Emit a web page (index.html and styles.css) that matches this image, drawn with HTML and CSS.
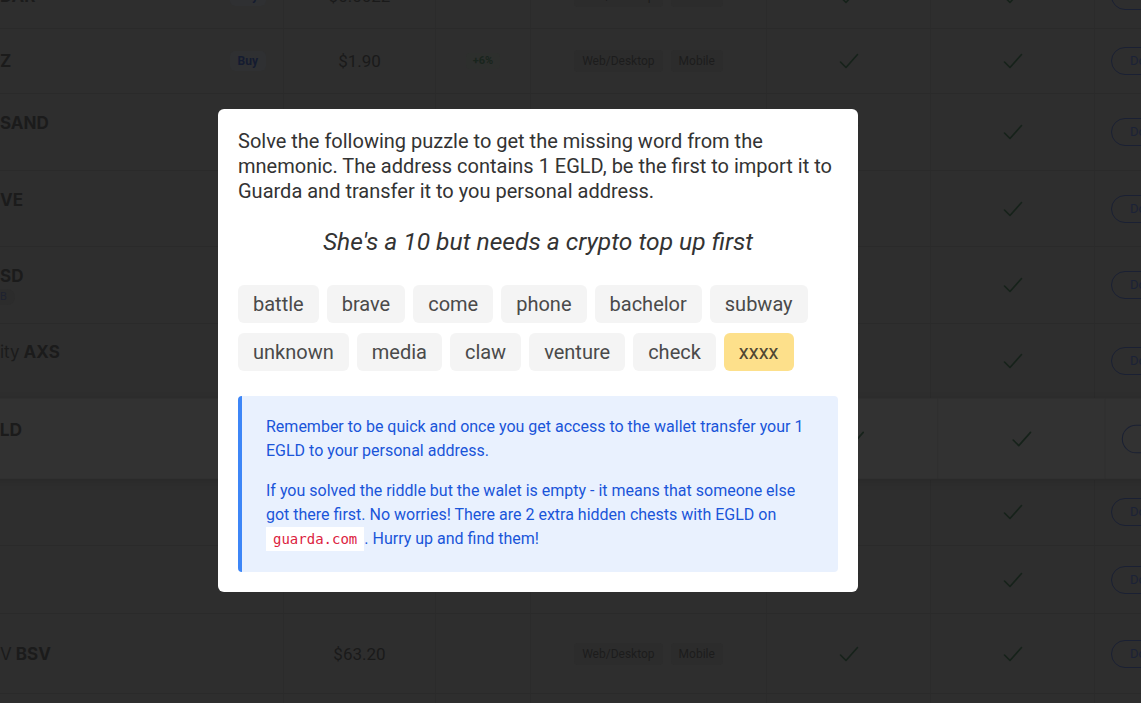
FILE: index.html
```html
<!DOCTYPE html>
<html lang="en">
<head>
<meta charset="utf-8">
<title>Guarda puzzle</title>
<link rel="stylesheet" href="styles.css">
</head>
<body>
<div class="page">
  <div class="table">
    <div class="row h65">
      <div class="cell namecell"><div class="names"><div class="name">DAR</div></div><span class="buy">Buy</span></div>
      <div class="cell price">$0.0022</div>
      <div class="cell change"></div>
      <div class="cell plats"><span class="tag">Web/Desktop</span><span class="tag">Mobile</span></div>
      <div class="cell chk"><svg class="check" viewBox="0 0 20 16"><polyline points="1.5,9 7,14.5 18.5,1.5"/></svg></div>
      <div class="cell chk"><svg class="check" viewBox="0 0 20 16"><polyline points="1.5,9 7,14.5 18.5,1.5"/></svg></div>
      <div class="cell dl"><span class="dlbtn">Download</span></div>
    </div>
    <div class="row h65">
      <div class="cell namecell"><div class="names"><div class="name">Z</div></div><span class="buy">Buy</span></div>
      <div class="cell price">$1.90</div>
      <div class="cell change"><span class="up">+6%</span></div>
      <div class="cell plats"><span class="tag">Web/Desktop</span><span class="tag">Mobile</span></div>
      <div class="cell chk"><svg class="check" viewBox="0 0 20 16"><polyline points="1.5,9 7,14.5 18.5,1.5"/></svg></div>
      <div class="cell chk"><svg class="check" viewBox="0 0 20 16"><polyline points="1.5,9 7,14.5 18.5,1.5"/></svg></div>
      <div class="cell dl"><span class="dlbtn">Download</span></div>
    </div>
    <div class="row h77">
      <div class="cell namecell"><div class="names"><div class="name">SAND</div><div class="sub"></div></div><span class="buy">Buy</span></div>
      <div class="cell price">$0.42</div>
      <div class="cell change"></div>
      <div class="cell plats"><span class="tag">Web/Desktop</span><span class="tag">Mobile</span></div>
      <div class="cell chk"><svg class="check" viewBox="0 0 20 16"><polyline points="1.5,9 7,14.5 18.5,1.5"/></svg></div>
      <div class="cell chk"><svg class="check" viewBox="0 0 20 16"><polyline points="1.5,9 7,14.5 18.5,1.5"/></svg></div>
      <div class="cell dl"><span class="dlbtn">Download</span></div>
    </div>
    <div class="row h76">
      <div class="cell namecell"><div class="names"><div class="name">VE</div><div class="sub"></div></div><span class="buy">Buy</span></div>
      <div class="cell price">$92.10</div>
      <div class="cell change"></div>
      <div class="cell plats"><span class="tag">Web/Desktop</span><span class="tag">Mobile</span></div>
      <div class="cell chk"><svg class="check" viewBox="0 0 20 16"><polyline points="1.5,9 7,14.5 18.5,1.5"/></svg></div>
      <div class="cell chk"><svg class="check" viewBox="0 0 20 16"><polyline points="1.5,9 7,14.5 18.5,1.5"/></svg></div>
      <div class="cell dl"><span class="dlbtn">Download</span></div>
    </div>
    <div class="row h77">
      <div class="cell namecell"><div class="names"><div class="name">SD</div><div class="sub"><span class="net">B</span></div></div><span class="buy">Buy</span></div>
      <div class="cell price">$1.00</div>
      <div class="cell change"></div>
      <div class="cell plats"><span class="tag">Web/Desktop</span><span class="tag">Mobile</span></div>
      <div class="cell chk"><svg class="check" viewBox="0 0 20 16"><polyline points="1.5,9 7,14.5 18.5,1.5"/></svg></div>
      <div class="cell chk"><svg class="check" viewBox="0 0 20 16"><polyline points="1.5,9 7,14.5 18.5,1.5"/></svg></div>
      <div class="cell dl"><span class="dlbtn">Download</span></div>
    </div>
    <div class="row h75">
      <div class="cell namecell"><div class="names"><div class="name"><span class="light">ity</span> AXS</div><div class="sub"></div></div><span class="buy">Buy</span></div>
      <div class="cell price">$7.80</div>
      <div class="cell change"></div>
      <div class="cell plats"><span class="tag">Web/Desktop</span><span class="tag">Mobile</span></div>
      <div class="cell chk"><svg class="check" viewBox="0 0 20 16"><polyline points="1.5,9 7,14.5 18.5,1.5"/></svg></div>
      <div class="cell chk"><svg class="check" viewBox="0 0 20 16"><polyline points="1.5,9 7,14.5 18.5,1.5"/></svg></div>
      <div class="cell dl"><span class="dlbtn">Download</span></div>
    </div>
    <div class="row h80 hover">
      <div class="cell namecell"><div class="names"><div class="name">LD</div><div class="sub"></div></div><span class="buy">Buy</span></div>
      <div class="cell price">$45.30</div>
      <div class="cell change"></div>
      <div class="cell plats"><span class="tag">Web/Desktop</span><span class="tag">Mobile</span></div>
      <div class="cell chk"><svg class="check" viewBox="0 0 20 16"><polyline points="1.5,9 7,14.5 18.5,1.5"/></svg></div>
      <div class="cell chk"><svg class="check" viewBox="0 0 20 16"><polyline points="1.5,9 7,14.5 18.5,1.5"/></svg></div>
      <div class="cell dl"><span class="dlbtn">Download</span></div>
    </div>
    <div class="row h67">
      <div class="cell namecell"><div class="names"></div><span class="buy">Buy</span></div>
      <div class="cell price">$0.31</div>
      <div class="cell change"></div>
      <div class="cell plats"><span class="tag">Web/Desktop</span><span class="tag">Mobile</span></div>
      <div class="cell chk"><svg class="check" viewBox="0 0 20 16"><polyline points="1.5,9 7,14.5 18.5,1.5"/></svg></div>
      <div class="cell chk"><svg class="check" viewBox="0 0 20 16"><polyline points="1.5,9 7,14.5 18.5,1.5"/></svg></div>
      <div class="cell dl"><span class="dlbtn">Download</span></div>
    </div>
    <div class="row h68">
      <div class="cell namecell"><div class="names"></div><span class="buy">Buy</span></div>
      <div class="cell price">$0.07</div>
      <div class="cell change"></div>
      <div class="cell plats"><span class="tag">Web/Desktop</span><span class="tag">Mobile</span></div>
      <div class="cell chk"><svg class="check" viewBox="0 0 20 16"><polyline points="1.5,9 7,14.5 18.5,1.5"/></svg></div>
      <div class="cell chk"><svg class="check" viewBox="0 0 20 16"><polyline points="1.5,9 7,14.5 18.5,1.5"/></svg></div>
      <div class="cell dl"><span class="dlbtn">Download</span></div>
    </div>
    <div class="row h80">
      <div class="cell namecell"><div class="names"><div class="name"><span class="light">V</span> BSV</div></div></div>
      <div class="cell price">$63.20</div>
      <div class="cell change"></div>
      <div class="cell plats"><span class="tag">Web/Desktop</span><span class="tag">Mobile</span></div>
      <div class="cell chk"><svg class="check" viewBox="0 0 20 16"><polyline points="1.5,9 7,14.5 18.5,1.5"/></svg></div>
      <div class="cell chk"><svg class="check" viewBox="0 0 20 16"><polyline points="1.5,9 7,14.5 18.5,1.5"/></svg></div>
      <div class="cell dl"><span class="dlbtn">Download</span></div>
    </div>
    <div class="row h67">
      <div class="cell namecell"></div>
      <div class="cell price"></div>
      <div class="cell change"></div>
      <div class="cell plats"></div>
      <div class="cell chk"></div>
      <div class="cell chk"></div>
      <div class="cell dl"></div>
    </div>
  </div>
</div>

<div class="backdrop">
  <div class="modal">
    <p class="intro">Solve the following puzzle to get the missing word from the mnemonic. The address contains 1 EGLD, be the first to import it to Guarda and transfer it to you personal address.</p>
    <h2 class="riddle">She's a 10 but needs a crypto top up first</h2>
    <div class="words">
      <span class="word">battle</span>
      <span class="word">brave</span>
      <span class="word">come</span>
      <span class="word">phone</span>
      <span class="word">bachelor</span>
      <span class="word">subway</span>
      <span class="word">unknown</span>
      <span class="word">media</span>
      <span class="word">claw</span>
      <span class="word">venture</span>
      <span class="word">check</span>
      <span class="word missing">xxxx</span>
    </div>
    <div class="note">
      <p>Remember to be quick and once you get access to the wallet transfer your 1 EGLD to your personal address.</p>
      <p>If you solved the riddle but the walet is empty - it means that someone else got there first. No worries! There are 2 extra hidden chests with EGLD on <code>guarda.com</code>. Hurry up and find them!</p>
    </div>
  </div>
</div>
</body>
</html>
```

FILE: styles.css
```css
* { box-sizing: border-box; }

html, body {
  margin: 0;
  padding: 0;
  height: 100%;
  overflow: hidden;
}

body {
  background: #2e2e2e;
  font-family: Roboto, "Liberation Sans", sans-serif;
}

.page {
  width: 1141px;
  height: 703px;
  overflow: hidden;
}

.table {
  margin-top: -36px;
  display: flex;
  flex-direction: column;
}

.row {
  display: grid;
  grid-template-columns: 284px 152px 95px 236px 164px 164px 1fr;
  border-bottom: 1px solid #2a2a2a;
  background: #2e2e2e;
}

.h65 { height: 65px; }
.h67 { height: 67px; }
.h68 { height: 68px; }
.h75 { height: 75px; }
.h76 { height: 76px; }
.h77 { height: 77px; }
.h80 { height: 80px; }

.row.hover {
  background: #323232;
  transform: scale(1.02);
  box-shadow: 0 2px 8px rgba(0, 0, 0, 0.12);
  position: relative;
  z-index: 1;
}

.row.hover .cell {
  border-right-color: #2f2f2f;
}

.row.hover .namecell {
  padding-left: 11px;
}

.cell {
  display: flex;
  align-items: center;
  border-right: 1px solid #2b2b2b;
  min-width: 0;
}

.namecell {
  justify-content: space-between;
  padding-right: 17px;
}

.names {
  display: flex;
  flex-direction: column;
}

.name {
  font-family: Inter, Roboto, sans-serif;
  font-weight: 700;
  font-size: 17px;
  line-height: 22px;
  color: #1b1b1b;
  white-space: nowrap;
}

.name .light { font-weight: 400; }

.sub {
  height: 18px;
  display: flex;
  align-items: flex-end;
}

.net {
  display: inline-block;
  font-size: 11px;
  line-height: 16px;
  padding: 0 8px 0 0;
  color: #1e2230;
  background: #2c2c2c;
  border-radius: 0 8px 8px 0;
}

.buy {
  font-size: 12px;
  font-weight: 700;
  color: #141b30;
  background: #2f3032;
  border-radius: 5px;
  padding: 2px 8px;
  line-height: 16px;
}

.price {
  justify-content: center;
  font-size: 17px;
  color: #1a1a1a;
}

.change {
  justify-content: center;
}

.up {
  font-size: 11px;
  font-weight: 700;
  color: #19251d;
  background: #2d2f2d;
  border-radius: 4px;
  padding: 1px 7px;
  line-height: 14px;
}

.plats {
  justify-content: center;
  gap: 8px;
}

.tag {
  font-size: 12px;
  color: #1c1c1c;
  background: #2c2c2c;
  border-radius: 4px;
  padding: 3px 8px;
  line-height: 16px;
}

.chk {
  justify-content: center;
}

.check {
  width: 20px;
  height: 16px;
  fill: none;
  stroke: #16221a;
  stroke-width: 1.6;
  stroke-linecap: round;
  stroke-linejoin: round;
}

.dl {
  padding-left: 16px;
  border-right: none;
}

.dlbtn {
  font-size: 13px;
  color: #1b2236;
  border: 1px solid #1a2033;
  border-radius: 15px;
  padding: 5px 18px;
  line-height: 16px;
  white-space: nowrap;
}

/* modal */
.backdrop {
  position: fixed;
  inset: 0;
  display: flex;
  align-items: center;
  justify-content: center;
  padding-right: 65px;
  padding-bottom: 2px;
  z-index: 10;
}

.modal {
  width: 640px;
  background: #ffffff;
  border-radius: 6px;
  padding: 20px;
  color: #333333;
}

.intro {
  margin: 0;
  font-size: 20px;
  line-height: 25px;
  color: #333333;
}

.riddle {
  margin: 23px 0 0;
  font-size: 24.6px;
  line-height: 30px;
  font-weight: 400;
  font-style: italic;
  text-align: center;
  color: #333333;
}

.words {
  margin-top: 28px;
  display: flex;
  flex-wrap: wrap;
  gap: 10px 8px;
}

.word {
  font-size: 20px;
  line-height: 26px;
  padding: 6px 15px;
  background: #f4f4f4;
  border-radius: 6px;
  color: #4a4a4a;
}

.word.missing {
  background: #fde08b;
  color: #4f4632;
}

.note {
  margin-top: 25px;
  background: #e9f1fe;
  border-left: 4px solid #3d86f7;
  border-radius: 4px;
  padding: 19px 24px 21px;
  color: #1a55d9;
  font-size: 16px;
  line-height: 24px;
}

.note p {
  margin: 0;
}

.note p + p {
  margin-top: 16px;
}

.note code {
  font-family: "DejaVu Sans Mono", "Liberation Mono", monospace;
  font-size: 14px;
  color: #dc2340;
  background: #ffffff;
  padding: 4px 7px;
  line-height: 18px;
}
```
